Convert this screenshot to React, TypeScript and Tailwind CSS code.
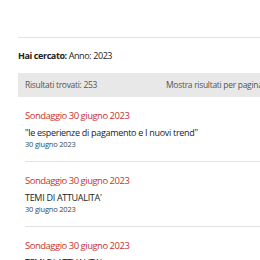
const items = [
  { title: "Sondaggio 30 giugno 2023", text: "\"le esperienze di pagamento e I nuovi trend\"", date: "30 giugno 2023" },
  { title: "Sondaggio 30 giugno 2023", text: "TEMI DI ATTUALITA'", date: "30 giugno 2023" },
  { title: "Sondaggio 30 giugno 2023", text: "TEMI DI ATTUALITA'", date: "30 giugno 2023" },
];

export default function App() {
  return (
    <div className="h-[260px] w-[260px] overflow-hidden bg-white font-['Open_Sans',sans-serif]">
      <div className="w-[300px] pl-[18px] pt-[37px]">
        <div className="border-t border-[#e2e2e2]" />
        <p className="mt-[11px] whitespace-nowrap text-[9px] leading-[14px] tracking-[-0.4px] text-[#222]">
          <span className="font-bold">Hai cercato:</span> Anno: 2023
        </p>
        <div className="mt-[10px] flex h-[24px] items-center whitespace-nowrap bg-[#e8e8e8] pl-[7px] text-[8.5px] tracking-[-0.3px] text-[#555]">
          <span className="w-[141px]">Risultati trovati: 253</span>
          <span>Mostra risultati per pagina</span>
        </div>
        <ul className="pl-[7px]">
          {items.map((it, i) => (
            <li key={i} className="border-b border-[#e2e2e2] pb-[12px] pt-[12px]">
              <h3 className="whitespace-nowrap text-[9.5px] leading-[14px] tracking-[-0.5px] text-[#c8342b]">{it.title}</h3>
              <p className="mt-[3px] whitespace-nowrap text-[9px] leading-[13px] tracking-[-0.3px] text-[#222]">{it.text}</p>
              <p className="whitespace-nowrap text-[7.5px] leading-[10px] tracking-[-0.2px] text-[#2e4a5a]">{it.date}</p>
            </li>
          ))}
        </ul>
      </div>
    </div>
  );
}
